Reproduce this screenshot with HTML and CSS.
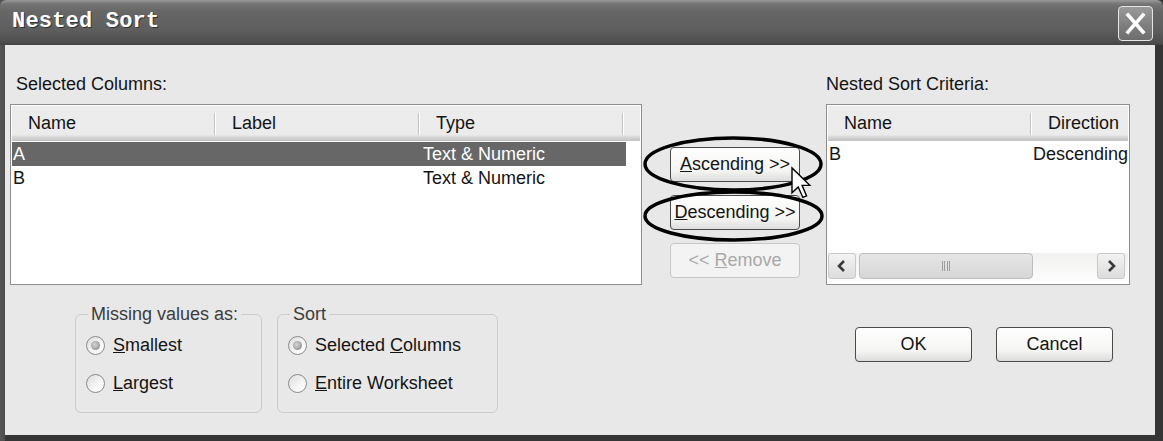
FILE: index.html
```html
<!DOCTYPE html>
<html>
<head>
    <title>Nested Sort</title>
    <meta charset="UTF-8">
    <link rel="stylesheet" href="styles.css">
</head>
<body>
    <div class="window">
        <div class="titlebar">
            <span class="title">Nested Sort</span>
            <span class="close-btn">
                <svg width="33" height="33" viewBox="0 0 33 33">
                    <path d="M9 8 L24 25 M24 8 L9 25" stroke="#fff" stroke-width="3.6" stroke-linecap="square" fill="none"/>
                </svg>
            </span>
        </div>

        <div class="client">
            <div class="top">
                <div class="pane pane-left">
                    <div class="pane-label">Selected Columns:</div>
                    <div class="list">
                        <div class="list-head">
                            <div class="hcell">Name</div>
                            <div class="hcell">Label</div>
                            <div class="hcell">Type</div>
                            <div class="hfill"></div>
                        </div>
                        <div class="list-body">
                            <div class="row selected">
                                <span class="cell cell-first">A</span>
                                <span class="cell"></span>
                                <span class="cell">Text &amp; Numeric</span>
                            </div>
                            <div class="row">
                                <span class="cell cell-first">B</span>
                                <span class="cell"></span>
                                <span class="cell">Text &amp; Numeric</span>
                            </div>
                        </div>
                    </div>
                </div>

                <div class="pane-mid">
                    <button class="btn btn-move"><u>A</u>scending &gt;&gt;</button>
                    <button class="btn btn-move"><u>D</u>escending &gt;&gt;</button>
                    <button class="btn btn-move" disabled>&lt;&lt; <u>R</u>emove</button>

                    <!-- hand drawn marks over the two buttons -->
                    <svg class="annot" width="184" height="240" viewBox="0 0 184 240">
                        <ellipse cx="91" cy="119" rx="88" ry="26" fill="none" stroke="#000" stroke-width="3.5"/>
                        <ellipse cx="91.5" cy="171" rx="88.5" ry="24" fill="none" stroke="#000" stroke-width="3.5"/>
                        <path transform="translate(150,123) scale(1.55)" d="M0 0 L0 16 L4 12.2 L7 19 L9.4 18 L6.5 11.2 L11.5 11.2 Z" fill="#fff" stroke="#000" stroke-width="0.9" stroke-linejoin="miter"/>
                    </svg>
                </div>

                <div class="pane pane-right">
                    <div class="pane-label">Nested Sort Criteria:</div>
                    <div class="list list-criteria">
                        <div class="list-head">
                            <div class="hcell">Name</div>
                            <div class="hcell">Direction</div>
                        </div>
                        <div class="list-body">
                            <div class="row">
                                <span class="cell cell-first">B</span>
                                <span class="cell cell-dir">Descending</span>
                            </div>
                        </div>
                        <div class="hscroll">
                            <span class="sb-btn">
                                <svg width="12" height="14" viewBox="0 0 12 14"><path d="M8 2 L3 7 L8 12" stroke="#3a3a3a" stroke-width="2.6" fill="none"/></svg>
                            </span>
                            <span class="sb-thumb"><span class="grip"></span></span>
                            <span class="sb-track"></span>
                            <span class="sb-btn">
                                <svg width="12" height="14" viewBox="0 0 12 14"><path d="M4 2 L9 7 L4 12" stroke="#3a3a3a" stroke-width="2.6" fill="none"/></svg>
                            </span>
                        </div>
                    </div>
                </div>
            </div>

            <div class="bottom">
                <fieldset class="group group-missing">
                    <legend>Missing values as:</legend>
                    <label class="radio"><span class="radio-mark checked"></span><span><u>S</u>mallest</span></label>
                    <label class="radio"><span class="radio-mark"></span><span><u>L</u>argest</span></label>
                </fieldset>

                <fieldset class="group group-sort">
                    <legend>Sort</legend>
                    <label class="radio"><span class="radio-mark checked"></span><span>Selected <u>C</u>olumns</span></label>
                    <label class="radio"><span class="radio-mark"></span><span><u>E</u>ntire Worksheet</span></label>
                </fieldset>

                <div class="actions">
                    <button class="btn btn-dlg">OK</button>
                    <button class="btn btn-dlg">Cancel</button>
                </div>
            </div>
        </div>
    </div>
</body>
</html>
```

FILE: styles.css
```css
:root {
    --face: #e8e8e8;
    --text: #141414;
    --frame: #353535;
    --list-border: #8e8e8e;
    --selected: #676767;
    --ui-font: "Liberation Sans", Arial, sans-serif;
}

body {
    margin: 0;
    background: #fff;
    font-family: var(--ui-font);
    font-size: 18px;
    color: var(--text);
}

.window {
    width: 1163px;
    height: 441px;
    display: flex;
    flex-direction: column;
    background: linear-gradient(to right, #555 0, #4c4c4c 5px, var(--frame) 5px);
}

/* title bar */

.titlebar {
    height: 45px;
    flex: none;
    display: flex;
    align-items: center;
    justify-content: space-between;
    padding: 0 10px 0 12px;
    background: linear-gradient(to bottom, #9a9a9a 0, #747474 4px, #666 12px, #5e5e5e 30px, #4e4e4e 42px, #444 45px);
    border-top-left-radius: 6px;
    border-top-right-radius: 6px;
}

.title {
    font-family: "Liberation Mono", monospace;
    font-weight: bold;
    font-size: 22px;
    color: #fff;
    text-shadow: 1px 1px 0 #333;
    letter-spacing: 0.2px;
    margin-top: -2px;
}

.close-btn {
    width: 35px;
    height: 35px;
    box-sizing: border-box;
    border: 1px solid #e6e6e6;
    border-radius: 4px;
    background: linear-gradient(to bottom, #9a9a9a, #7c7c7c 60%, #6e6e6e);
    display: flex;
    align-items: center;
    justify-content: center;
    margin-top: 1px;
}

/* client area */

.client {
    flex: 1;
    margin: 0 8px 6px 5px;
    background: var(--face);
    display: flex;
    flex-direction: column;
}

.top {
    display: flex;
    height: 240px;
}

.pane {
    display: flex;
    flex-direction: column;
}

.pane-left {
    width: 632px;
    margin-left: 5px;
}

.pane-right {
    width: 304px;
}

.pane-label {
    height: 59px;
    box-sizing: border-box;
    padding: 27px 0 0 6px;
    line-height: 24px;
}

.pane-right .pane-label {
    padding-left: 0;
}

/* list views */

.list {
    height: 181px;
    box-sizing: border-box;
    border: 1px solid var(--list-border);
    background: #fff;
    padding: 1px;
    overflow: hidden;
    display: flex;
    flex-direction: column;
}

.list-criteria {
    height: 182px;
}

.list-head {
    display: flex;
    flex: none;
    height: 35px;
    background: linear-gradient(to bottom, #ececec 0, #ebebeb 29px, #dedede 30px, #d2d2d2 32px, #c2c2c2 35px);
}

.hcell {
    flex: none;
    width: 204px;
    box-sizing: border-box;
    padding-left: 16px;
    line-height: 35px;
    white-space: nowrap;
    background:
        linear-gradient(#c4c4c4, #c4c4c4) right 1px top 7px / 1px 22px no-repeat,
        linear-gradient(#fff, #fff) right 0 top 7px / 1px 22px no-repeat;
}

.hfill {
    flex: 1;
}

.list-body {
    flex: 1;
    padding-top: 1px;
}

.row {
    display: flex;
    height: 24px;
    line-height: 24px;
    white-space: nowrap;
    width: 614px;
}

.row.selected {
    background: var(--selected);
    color: #fff;
}

.cell {
    flex: none;
    width: 204px;
    box-sizing: border-box;
    padding-left: 3px;
}

.cell-first {
    padding-left: 1px;
}

.list-criteria .row {
    width: auto;
}

.cell-dir {
    padding-left: 1px;
}

/* horizontal scroll bar */

.hscroll {
    flex: none;
    height: 30px;
    display: flex;
    align-items: flex-start;
    padding-right: 3px;
    background: linear-gradient(to bottom, #f1f1ef, #fdfdfd);
}

.sb-btn {
    width: 28px;
    height: 26px;
    box-sizing: border-box;
    border: 1px solid #c8c8c8;
    border-radius: 3px;
    background: linear-gradient(to bottom, #f3f3f3, #dcdcdc);
    display: flex;
    align-items: center;
    justify-content: center;
}

.sb-thumb {
    width: 174px;
    height: 26px;
    margin-left: 3px;
    box-sizing: border-box;
    border: 1px solid #bdbdbd;
    border-radius: 4px;
    background: linear-gradient(to bottom, #e6e6e6, #d6d6d6);
    display: flex;
    align-items: center;
    justify-content: center;
}

.grip {
    width: 9px;
    height: 10px;
    background: repeating-linear-gradient(to right, #9c9c9c 0 1px, transparent 1px 2.5px);
}

.sb-track {
    flex: 1;
}

/* middle buttons */

.pane-mid {
    width: 184px;
    position: relative;
    display: flex;
    flex-direction: column;
    align-items: flex-start;
    gap: 13px;
    box-sizing: border-box;
    padding: 102px 0 0 28px;
}

.annot {
    position: absolute;
    left: 0;
    top: 0;
    overflow: visible;
    pointer-events: none;
}

.btn {
    font-family: var(--ui-font);
    font-size: 18px;
    color: var(--text);
    height: 35px;
    padding: 0;
    white-space: nowrap;
    border: 1px solid #4a4a4a;
    border-radius: 4px;
    background: linear-gradient(to bottom, #ffffff, #f4f4f2 70%, #dcdcdc);
    cursor: pointer;
}

.btn-move {
    width: 130px;
}

.btn:disabled {
    border-color: #c6c6c6;
    color: #a9a9a9;
    background: #f3f3f3;
}

.btn-dlg {
    width: 117px;
}

/* bottom row */

.bottom {
    display: flex;
    align-items: flex-start;
    margin-top: 19px;
    padding-left: 70px;
}

.group {
    margin: 0;
    padding: 2px 0 10px 10px;
    border: 1px solid #cbcbcb;
    border-radius: 6px;
}

.group legend {
    padding: 0 3px;
    margin-left: 2px;
    line-height: 20px;
    white-space: nowrap;
    color: #3c3c3c;
}

.group-missing {
    width: 187px;
    box-sizing: border-box;
    margin-right: 15px;
}

.group-sort {
    width: 221px;
    box-sizing: border-box;
}

.radio {
    display: flex;
    align-items: center;
    gap: 8px;
    height: 38px;
    white-space: nowrap;
}

.radio-mark {
    width: 19px;
    height: 19px;
    box-sizing: border-box;
    border: 1px solid #8a8a8a;
    border-radius: 50%;
    background: linear-gradient(135deg, #dcdcdc, #f6f6f6 60%, #fff);
    display: flex;
    align-items: center;
    justify-content: center;
}

.radio-mark.checked::after {
    content: "";
    width: 9px;
    height: 9px;
    border-radius: 50%;
    background: radial-gradient(circle at 40% 40%, #d6d6d6, #9a9a9a 70%, #8a8a8a);
}

.actions {
    display: flex;
    gap: 24px;
    margin-left: 357px;
    margin-top: 23px;
}
```
